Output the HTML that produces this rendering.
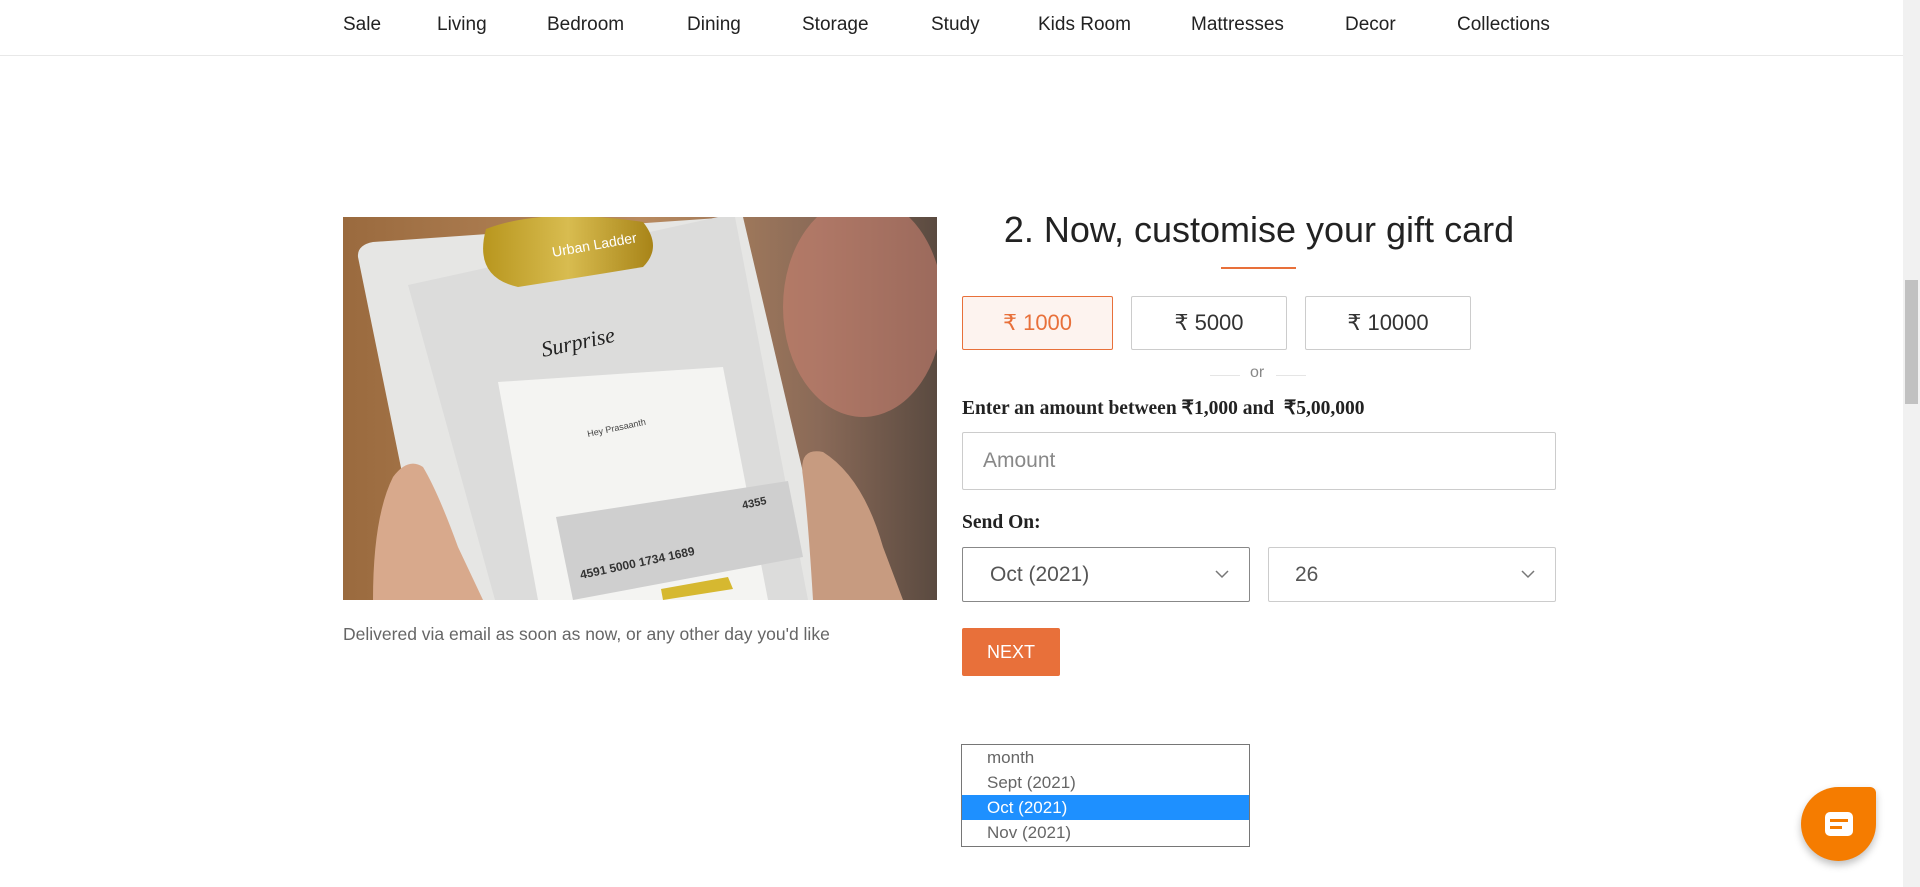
<!DOCTYPE html>
<html><head><meta charset="utf-8">
<style>
*{box-sizing:border-box;margin:0;padding:0}
html,body{width:1920px;height:887px;overflow:hidden;background:#fff;font-family:"Liberation Sans",sans-serif;color:#222}
.nav{position:absolute;left:0;top:0;width:1903px;height:56px;border-bottom:1px solid #e8e8e8}
.nav span{position:absolute;top:14px;font-size:19px;color:#222}
.sb{position:absolute;right:0;top:0;width:17px;height:887px;background:#f1f1f1}
.sb .th{position:absolute;left:2px;top:280px;width:13px;height:124px;background:#c1c1c1}
.a{position:absolute}
.btn{position:absolute;top:296px;height:54px;border:1px solid #ccc;border-radius:2px;font-size:22px;color:#333;display:flex;align-items:center;justify-content:center}
.lbl{position:absolute;font-family:"Liberation Serif",serif;font-weight:bold;font-size:19.5px;color:#222}
.inp{position:absolute;border:1px solid #ccc;border-radius:2px;font-size:21px;color:#888;display:flex;align-items:center}
.opt{position:absolute;left:0;width:100%;height:25px;font-size:17px;color:#666;padding-left:25px;line-height:25px}
</style></head><body>
<div class="nav">
<span style="left:343px">Sale</span><span style="left:437px">Living</span><span style="left:547px">Bedroom</span><span style="left:687px">Dining</span><span style="left:802px">Storage</span><span style="left:931px">Study</span><span style="left:1038px">Kids Room</span><span style="left:1191px">Mattresses</span><span style="left:1345px">Decor</span><span style="left:1457px">Collections</span>
</div>
<div class="sb"><div class="th"></div></div>

<svg class="a" style="left:343px;top:217px" width="594" height="383" viewBox="0 0 594 383">
<defs><linearGradient id="bg" x1="0" x2="1"><stop offset="0" stop-color="#9a6a3e"/><stop offset=".5" stop-color="#b98a5e"/><stop offset=".8" stop-color="#8a6a58"/><stop offset="1" stop-color="#5a4a40"/></linearGradient>
<linearGradient id="gold" x1="0" x2="1"><stop offset="0" stop-color="#b8961e"/><stop offset=".5" stop-color="#d8bc50"/><stop offset="1" stop-color="#a88418"/></linearGradient></defs>
<rect width="594" height="383" fill="url(#bg)"/>
<ellipse cx="520" cy="90" rx="80" ry="110" fill="#c88070" opacity=".6"/>
<path d="M15 40 Q14 28 30 25 L390 0 L400 0 L490 383 L85 383 Z" fill="#e6e6e4"/>
<path d="M65 68 L375 0 L392 0 L465 383 L152 383 Z" fill="#dcdcdb"/>
<path d="M143 12 Q200 -10 300 5 Q320 30 300 50 Q240 60 175 70 Q130 60 143 12Z" fill="url(#gold)"/>
<text x="210" y="40" fill="#fff" font-size="14" transform="rotate(-10 210 40)">Urban Ladder</text>
<text x="200" y="140" fill="#222" font-size="22" font-family="Liberation Serif" font-style="italic" transform="rotate(-12 200 140)">Surprise</text>
<path d="M155 165 L380 150 L425 383 L195 383 Z" fill="#f4f4f2"/>
<text x="245" y="220" fill="#444" font-size="9" transform="rotate(-12 245 220)">Hey Prasaanth</text>
<text x="287" y="305" fill="#333" font-size="12" font-weight="bold" transform="rotate(-12 287 305)">₹15000</text>
<path d="M213 300 L445 264 L460 340 L230 383 Z" fill="#cfcfcf"/>
<text x="238" y="362" fill="#333" font-size="12" font-weight="bold" transform="rotate(-12 238 362)">4591 5000 1734 1689</text>
<text x="400" y="292" fill="#333" font-size="11" font-weight="bold" transform="rotate(-12 400 292)">4355</text>
<path d="M318 372 L385 360 L390 372 L320 383Z" fill="#d6b830"/>
<path d="M30 383 Q30 300 50 260 Q65 240 80 250 Q95 275 115 330 L140 383Z" fill="#d8a98c"/>
<path d="M470 383 Q465 300 460 260 Q455 230 480 235 Q520 260 540 330 L560 383Z" fill="#c79b80"/>
</svg>
<div class="a" style="left:343px;top:624px;font-size:17.5px;color:#666">Delivered via email as soon as now, or any other day you'd like</div>

<div class="a" style="left:960px;width:598px;top:209px;text-align:center;font-size:36px;color:#222">2. Now, customise your gift card</div>
<div class="a" style="left:1221px;top:267px;width:75px;height:2px;background:#e8703a"></div>
<div class="btn" style="left:962px;width:151px;border-color:#e8703a;background:#fdf3ef;color:#e8703a">₹ 1000</div>
<div class="btn" style="left:1131px;width:156px">₹ 5000</div>
<div class="btn" style="left:1305px;width:166px">₹ 10000</div>
<div class="a" style="left:1210px;top:375px;width:30px;height:1px;background:#e5e5e5"></div>
<div class="a" style="left:1276px;top:375px;width:30px;height:1px;background:#e5e5e5"></div>
<div class="a" style="left:1250px;top:364px;font-size:16px;color:#888">or</div>
<div class="lbl" style="left:962px;top:396px">Enter an amount between ₹1,000 and &nbsp;₹5,00,000</div>
<div class="inp" style="left:962px;top:432px;width:594px;height:58px;padding-left:20px">Amount</div>
<div class="lbl" style="left:962px;top:512px">Send On:</div>
<div class="inp" style="left:962px;top:547px;width:288px;height:55px;padding-left:27px;color:#555;border-color:#888">Oct (2021)<svg style="position:absolute;right:20px;top:22px" width="14" height="9"><path d="M1 1 L7 7 L13 1" stroke="#777" stroke-width="1.5" fill="none"/></svg></div>
<div class="inp" style="left:1268px;top:547px;width:288px;height:55px;padding-left:26px;color:#555">26<svg style="position:absolute;right:20px;top:22px" width="14" height="9"><path d="M1 1 L7 7 L13 1" stroke="#777" stroke-width="1.5" fill="none"/></svg></div>
<div class="a" style="left:962px;top:628px;width:98px;height:48px;background:#e8703a;border-radius:2px;color:#fff;font-size:18px;display:flex;align-items:center;justify-content:center">NEXT</div>

<div class="a" style="left:961px;top:744px;width:289px;height:103px;border:1px solid #767676;background:#fff">
<div class="opt" style="top:0">month</div>
<div class="opt" style="top:25px">Sept (2021)</div>
<div class="opt" style="top:50px;background:#1e90ff;color:#fff">Oct (2021)</div>
<div class="opt" style="top:75px">Nov (2021)</div>
</div>

<div class="a" style="left:1801px;top:787px;width:75px;height:74px;background:#f57c00;border-radius:50%;border-top-right-radius:6px;box-shadow:0 4px 8px rgba(0,0,0,.25)"></div>
<div class="a" style="left:1825px;top:812px;width:28px;height:24px;background:#fff;border-radius:5px"></div>
<div class="a" style="left:1830px;top:819px;width:18px;height:3px;background:#f57c00"></div>
<div class="a" style="left:1830px;top:826px;width:12px;height:3px;background:#f57c00"></div>
</body></html>
